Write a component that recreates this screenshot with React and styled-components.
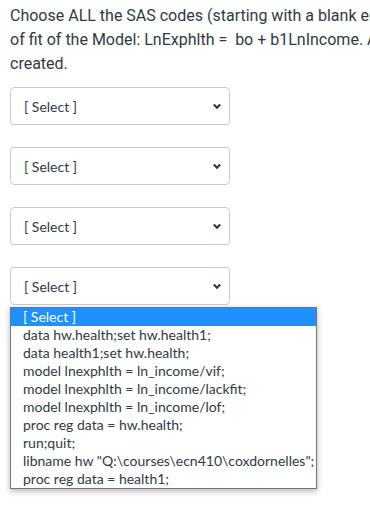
import React from 'react';
import styled, { createGlobalStyle } from 'styled-components';

const GlobalStyle = createGlobalStyle`
  html, body {
    margin: 0;
    padding: 0;
    background: #ffffff;
    overflow: hidden;
  }
`;

const Page = styled.div`
  position: relative;
  width: 370px;
  height: 510px;
  padding: 4px 0 0 10px;
  box-sizing: border-box;
  overflow: hidden;
`;

const Question = styled.div`
  font-family: Roboto, 'Liberation Sans', sans-serif;
  font-size: 16px;
  line-height: 24px;
  color: #2d3b45;
  margin: 0 0 11px;
`;

const Line = styled.div`
  white-space: pre;
`;

const Selects = styled.div`
  display: flex;
  flex-direction: column;
  gap: 22px;
`;

const SelectBox = styled.div`
  width: 220px;
  height: 38px;
  box-sizing: border-box;
  border: 1px solid #c7cdd1;
  border-radius: 4px;
  background: #fff;
  display: flex;
  align-items: center;
  justify-content: space-between;
  padding: 0 7px 0 13px;
  font-family: Lato, 'Open Sans', sans-serif;
  font-size: 14px;
  color: #2d3b45;
`;

const Chevron = () => (
  <svg width="10" height="10" viewBox="0 0 10 10">
    <path d="M1.8 3.5 L5 6.7 L8.2 3.5" fill="none" stroke="#2d3b45" strokeWidth="2.2" />
  </svg>
);

const Popup = styled.ul`
  position: absolute;
  left: 10px;
  top: 307px;
  width: 307px;
  margin: 0;
  padding: 0;
  list-style: none;
  box-sizing: border-box;
  border: 1px solid #767676;
  background: #fff;
  box-shadow: 0 2px 6px rgba(0, 0, 0, 0.3);
  font-family: Lato, 'Open Sans', sans-serif;
  font-size: 14px;
  color: #2d3b45;
`;

const Option = styled.li`
  height: 18px;
  line-height: 18px;
  padding-left: 12px;
  white-space: pre;
  background: ${p => (p.active ? '#1e90ff' : 'transparent')};
  color: ${p => (p.active ? '#fff' : '#2d3b45')};
`;

const options = [
  '[ Select ]',
  'data hw.health;set hw.health1;',
  'data health1;set hw.health;',
  'model lnexphlth = ln_income/vif;',
  'model lnexphlth = ln_income/lackfit;',
  'model lnexphlth = ln_income/lof;',
  'proc reg data = hw.health;',
  'run;quit;',
  'libname hw "Q:\\courses\\ecn410\\coxdornelles";',
  'proc reg data = health1;',
];

export default function App() {
  return (
    <Page>
      <GlobalStyle />
      <Question>
        <Line>Choose ALL the SAS codes (starting with a blank entry) to test goodness</Line>
        <Line>of fit of the Model: LnExphlth =  bo + b1LnIncome. Assume the data set is</Line>
        <Line>created.</Line>
      </Question>
      <Selects>
        {[0, 1, 2, 3].map(i => (
          <SelectBox key={i}>
            <span>[ Select ]</span>
            <Chevron />
          </SelectBox>
        ))}
      </Selects>
      <Popup>
        {options.map((o, i) => (
          <Option key={i} active={i === 0}>
            {o}
          </Option>
        ))}
      </Popup>
    </Page>
  );
}
